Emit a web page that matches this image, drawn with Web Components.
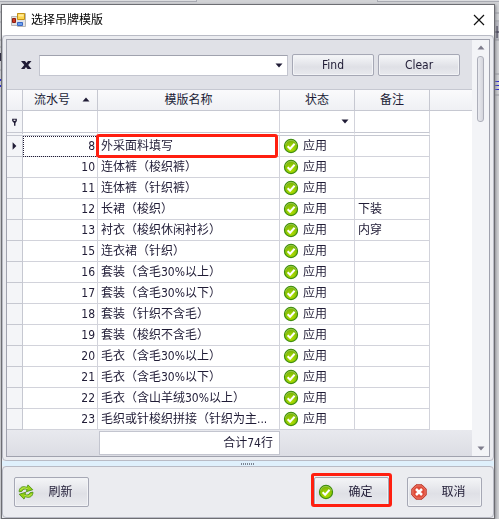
<!DOCTYPE html>
<html lang="zh-CN">
<head>
<meta charset="utf-8">
<title>选择吊牌模版</title>
<style>
  html {
    --ink: #201c36;
    --line: #d2d3db;
    --edge: #a0a2ae;
    --panel: #e0e1e7;
    --accent: #ff1f10;
  }

  body {
    margin: 0;
    min-height: 100vh;
    color: var(--ink);
    background: #d2d3d6;
    font: 12px/16px "DejaVu Sans Condensed", "Noto Sans", "Noto Sans CJK SC", sans-serif;
    overflow: hidden;
  }
</style>
</head>
<body>
<back-drop></back-drop>
<dialog-window heading="选择吊牌模版">
  <scroll-frame>
    <find-bar></find-bar>
    <template-grid></template-grid>
  </scroll-frame>
  <icon-button slot="start" icon="refresh">刷新</icon-button>
  <icon-button slot="end" icon="ok" marked>确定</icon-button>
  <icon-button slot="end" icon="cancel">取消</icon-button>
</dialog-window>

<script>
const makeTemplate = (html) => {
  const template = document.createElement('template');
  template.innerHTML = html;
  return template;
};

class BaseElement extends HTMLElement {
  constructor() {
    super();
    this.attachShadow({ mode: 'open' });
    this.shadowRoot.appendChild(this.constructor.template.content.cloneNode(true));
  }
}

/* Icons */

const ICONS = {
  ok: `
    <defs><radialGradient id="g" cx=".5" cy=".7" r=".7"><stop offset="0" stop-color="#b5e300"/><stop offset="1" stop-color="#6fae08"/></radialGradient></defs>
    <circle cx="8" cy="8" r="6.6" fill="url(#g)" stroke="#3f8f10" stroke-width="1.1"/>
    <path d="M2.6 6.6C3.6 3.2 6 2.4 8 2.4s4.4.8 5.4 4.2" fill="none" stroke="#a9cf62" stroke-width=".8"/>
    <path d="M4.6 8.200l2.5 2.5 4.5-4.900" fill="none" stroke="#fff" stroke-width="2"/>`,
  cancel: `
    <path d="M5 .8h6L15.2 5v6L11 15.2H5L.8 11V5z" fill="#df4a38" stroke="#bb3529"/>
    <path d="M5.4 1.900h5.2l3.5 3.5v5.2l-3.5 3.5H5.4l-3.500-3.500V5.4z" fill="none" stroke="#f08c78" stroke-width=".8"/>
    <path d="M5 5l6 6M11 5l-6 6" stroke="#fff" stroke-width="2.5"/>`,
  refresh: `
    <path d="M1.2 7.800C1 4.500 3.5 2.300 6.5 2.700l2.3.7L10 .9l4.800 4.800-6.500 2 .8-2.200C6.800 4.500 4.700 5 4 7.200z" fill="#96d016" stroke="#4f9414" stroke-width=".9" stroke-linejoin="round"/>
    <path d="M14.900 8.100c.2 3.400-2.300 5.600-5.400 5.200l-2.300-.7L6 15.100 1.200 10.300l6.500-2-.8 2.200c2.300 1 4.400.5 5.100-1.700z" fill="#96d016" stroke="#4f9414" stroke-width=".9" stroke-linejoin="round"/>
    <path d="M2.500 6C4 3.600 6 3.500 9.500 4.500M13.500 10c-1.500 2.400-3.500 2.500-7 1.500" fill="none" stroke="#cdf06a" stroke-width=".8"/>`,
  form: `
    <path d="M.5 4.500h6V1.500h8v13h-8v-1h-6z" fill="#e2e2e4" stroke="#b8b8b8"/>
    <path d="M6.500 1.500h7v6h-7z" fill="#ffd64d" stroke="#c39217"/>
    <path d="M7.500 2.500h5v2h-5z" fill="#ffec9c"/>
    <path d="M1.500 6.500h3v4h-3z" fill="#cf3a22" stroke="#8e1e12"/>
    <path d="M6.500 10.500h5v3h-5z" fill="#6ba0ee" stroke="#3a68c4"/>`,
  close: '<path d="M3 3l10 10M13 3L3 13" stroke="#111" stroke-width="1.2"/>',
  clear: '<path d="M3 4h4l1.500 2L10 4h3.500l-3.300 4 3.300 4h-4L8 10l-1.500 2H3l3.300-4z" fill="#201c36"/>',
  down: '<path d="M4.500 6.500h7L8 10.500z" fill="#201c36"/>',
  up: '<path d="M4.500 9.500h7L8 5.500z" fill="#201c36"/>',
  right: '<path d="M6 4v8l4-4z" fill="#201c36"/>',
  pin: '<path d="M5.500 4.500h5V7L9 9v3H7.500V9l-2-2z" fill="#201c36"/><path d="M7 5.500h2v1.300H7z" fill="#fff"/>',
};

class UiIcon extends BaseElement {
  static template = makeTemplate(`
    <style>
      :host { display: inline-block; flex: none; width: 16px; height: 16px; }
      svg { display: block; width: 100%; height: 100%; }
    </style>
    <svg viewBox="0 0 16 16" aria-hidden="true"></svg>
  `);

  static observedAttributes = ['name'];

  attributeChangedCallback() {
    this.shadowRoot.querySelector('svg').innerHTML = ICONS[this.getAttribute('name')] || '';
  }
}

/* Edges of the application behind the dialog */

class BackDrop extends BaseElement {
  static template = makeTemplate(`
    <style>
      :host { position: fixed; inset: 0; z-index: -1; }
      .top { height: 2px; display: flex; gap: 180px; }
      .top div { border: 1px solid #a9abb3; border-top: 0; background: #dcdde0; }
      .top div:first-child { width: 196px; border-left: 0; }
      .top div:last-child { flex: 1; border-right: 0; }
      .left, .right { position: absolute; top: 0; }
      .left { left: 0; }
      .right { right: 0; }
    </style>
    <div class="top"><div></div><div></div></div>
    <svg class="left" width="2" height="519">
      <path d="M0 12h2M0 22h2M0 40h2M0 47h2M0 70h2" stroke="#9a9ca4"/>
      <path d="M0 53h2v8H0z" fill="#201c36"/>
      <path d="M0 79h2v2H0zM0 85h2v2H0z" fill="#2020d8"/>
    </svg>
    <svg class="right" width="5" height="519">
      <path d="M0 22h5v18H0z" fill="#bfc0c8"/>
      <path d="M0 13h5M0 21h5M0 40h5M0 74h5M0 95h5" stroke="#9a9ca4"/>
      <path d="M0 32h5M3 26v12" stroke="#201c36"/>
      <path d="M1 81h4v1H1zM1 85h4v1H1zM1 89h4v1H1z" fill="#2020d8"/>
    </svg>
  `);
}

/* Dialog shell: title bar, main area, splitter, button bar */

class DialogWindow extends BaseElement {
  static template = makeTemplate(`
    <style>
      :host {
        display: block;
        margin: 4px 4px 0 1px;
        border: 1px solid #6d6e73;
        background: #ebecf0;
        box-shadow: 1px 1px 3px #8a8b90;
      }

      header {
        display: flex;
        align-items: center;
        gap: 4px;
        height: 30px;
        padding: 0 7px 0 9px;
        background: #fff;
      }

      h1 { flex: 1; margin: 0; font: inherit; color: #000; }

      .close {
        display: flex;
        padding: 0;
        border: 0;
        background: none;
      }

      main {
        padding: 3px;
        border: 1px solid #b9bbc5;
        border-radius: 4px;
        background: #ebecf0;
      }

      .splitter {
        display: flex;
        align-items: center;
        justify-content: center;
        height: 5px;
        background: #dff0fc;
      }

      .grip {
        width: 14px;
        height: 2px;
        background: repeating-linear-gradient(90deg, #7b8492 0 1px, transparent 1px 2px);
      }

      footer {
        display: flex;
        gap: 18px;
        padding: 10px 11px;
        border: 1px solid #b9bbc5;
        border-radius: 4px;
      }

      .space { flex: 1; }
    </style>
    <header>
      <ui-icon name="form"></ui-icon>
      <h1></h1>
      <button class="close" aria-label="关闭"><ui-icon name="close"></ui-icon></button>
    </header>
    <main><slot></slot></main>
    <div class="splitter"><div class="grip"></div></div>
    <footer>
      <slot name="start"></slot>
      <div class="space"></div>
      <slot name="end"></slot>
    </footer>
  `);

  connectedCallback() {
    this.shadowRoot.querySelector('h1').textContent = this.getAttribute('heading');
  }
}

class ScrollFrame extends BaseElement {
  static template = makeTemplate(`
    <style>
      :host {
        display: flex;
        border: 1px solid var(--edge);
        background: var(--panel);
      }

      .content { flex: 1; min-width: 0; }

      .bar {
        display: flex;
        flex-direction: column;
        align-items: center;
        width: 17px;
        background: #f3f4f7;
      }

      .bar ui-icon { opacity: .55; }

      .thumb {
        box-sizing: border-box;
        width: 7px;
        height: 66px;
        border: 1px solid #adafba;
        border-radius: 3px;
        background: linear-gradient(90deg, #e9eaef, #d4d5dc);
      }

      .space { flex: 1; }
    </style>
    <div class="content"><slot></slot></div>
    <div class="bar">
      <ui-icon name="up"></ui-icon>
      <div class="thumb"></div>
      <div class="space"></div>
      <ui-icon name="down"></ui-icon>
    </div>
  `);
}

class PushButton extends BaseElement {
  static template = makeTemplate(`
    <style>
      :host { display: inline-block; }

      button {
        display: block;
        box-sizing: border-box;
        width: 82px;
        height: 22px;
        padding: 0;
        border: 1px solid #a6a8b5;
        border-radius: 2px;
        background: linear-gradient(#f6f7f9, #dfe0e6 60%, #e9eaee);
        box-shadow: inset 0 0 0 1px #f2f3f6;
        color: inherit;
        font: inherit;
      }
    </style>
    <button><slot></slot></button>
  `);
}

class FindBar extends BaseElement {
  static template = makeTemplate(`
    <style>
      :host {
        display: flex;
        align-items: center;
        gap: 4px;
        padding: 14px 12px 13px 11px;
      }

      .clear, .drop {
        display: flex;
        padding: 0;
        border: 0;
        background: none;
      }

      .clear { margin-right: 1px; }

      .combo {
        display: flex;
        flex: 1;
        align-items: center;
        box-sizing: border-box;
        height: 21px;
        border: 1px solid #c3c5cf;
        border-top-color: var(--edge);
        background: #fff;
      }

      input {
        flex: 1;
        min-width: 0;
        padding: 0 4px;
        border: 0;
        outline: 0;
        background: none;
        color: inherit;
        font: inherit;
      }
    </style>
    <button class="clear" aria-label="关闭查找"><ui-icon name="clear"></ui-icon></button>
    <div class="combo">
      <input type="text" aria-label="查找">
      <button class="drop" aria-label="历史"><ui-icon name="down"></ui-icon></button>
    </div>
    <push-button>Find</push-button>
    <push-button>Clear</push-button>
  `);
}

/* Grid */

const ROWS = [
  [8, '外采面料填写'],
  [10, '连体裤（梭织裤）'],
  [11, '连体裤（针织裤）'],
  [12, '长裙（梭织）', '下装'],
  [13, '衬衣（梭织休闲衬衫）', '内穿'],
  [15, '连衣裙（针织）'],
  [16, '套装（含毛30%以上）'],
  [17, '套装（含毛30%以下）'],
  [18, '套装（针织不含毛）'],
  [19, '套装（梭织不含毛）'],
  [20, '毛衣（含毛30%以上）'],
  [21, '毛衣（含毛30%以下）'],
  [22, '毛衣（含山羊绒30%以上）'],
  [23, '毛织或针梭织拼接（针织为主...'],
];

class TemplateGrid extends BaseElement {
  static template = makeTemplate(`
    <style>
      :host { display: block; }

      table {
        width: 100%;
        border-collapse: separate;
        border-spacing: 0;
        table-layout: fixed;
        background: #fff;
      }

      .col-mark { width: 16px; }
      .col-name { width: 182px; }
      .col-short { width: 75px; }

      th, td {
        box-sizing: border-box;
        position: relative;
        height: 21px;
        padding: 0 3px;
        border-right: 1px solid var(--line);
        border-bottom: 1px solid var(--line);
        font-weight: normal;
        white-space: nowrap;
        vertical-align: middle;
      }

      thead th {
        height: 22px;
        border-top: 1px solid #c3c5cf;
        border-color: #c6c8d1;
        background: linear-gradient(#fafafc, #eff0f4);
      }

      th:last-child, td:last-child { border-right: 0; }
      td:last-child { border-bottom: 0; }

      td:first-child {
        padding: 0;
        background: #f4f5f8;
        border-color: #c6c8d1;
      }

      td ui-icon { display: block; }
      td:first-child ui-icon { margin: 0 auto; width: 15px; }

      .sort { display: flex; align-items: center; }
      .sort span { flex: 1; }

      .filter td {
        height: 25px;
        padding: 0;
        border-bottom: 4px double #c6c8d1;
      }

      .filter td:last-child { border-bottom: 0; }

      .filter input, .filter select {
        display: block;
        box-sizing: border-box;
        width: 100%;
        height: 20px;
        padding: 0 4px;
        border: 0;
        outline: 0;
        appearance: none;
        background: none;
        color: inherit;
        font: inherit;
      }

      .filter .pick ui-icon {
        position: absolute;
        top: 2px;
        right: 1px;
        pointer-events: none;
      }

      .number { text-align: right; padding-right: 2px; }

      .focused { outline: 1px dotted var(--ink); outline-offset: -1px; }

      .marked::after {
        content: "";
        position: absolute;
        inset: -2px 1px -2px -2px;
        border: 3px solid var(--accent);
        border-radius: 3px;
      }

      .status { display: flex; align-items: center; gap: 4px; }

      .total {
        display: grid;
        grid-template-columns: 92px 181px 1fr;
        padding: 1px 0;
        background: linear-gradient(#e8e9ee, #dcdde4);
      }

      output {
        grid-column: 2;
        box-sizing: border-box;
        height: 24px;
        padding: 3px 6px;
        border: 1px solid #c3c5cf;
        background: #fff;
        text-align: right;
      }
    </style>
    <table>
      <colgroup>
        <col class="col-mark">
        <col class="col-short">
        <col class="col-name">
        <col class="col-short">
        <col class="col-short">
        <col>
      </colgroup>
      <thead>
        <tr>
          <th></th>
          <th><div class="sort"><span>流水号</span><ui-icon name="up"></ui-icon></div></th>
          <th>模版名称</th>
          <th>状态</th>
          <th>备注</th>
          <th></th>
        </tr>
      </thead>
      <tbody>
        <tr class="filter">
          <td><ui-icon name="pin"></ui-icon></td>
          <td><input type="text" aria-label="筛选流水号"></td>
          <td><input type="text" aria-label="筛选模版名称"></td>
          <td class="pick"><select aria-label="筛选状态"><option></option></select><ui-icon name="down"></ui-icon></td>
          <td><input type="text" aria-label="筛选备注"></td>
          <td></td>
        </tr>
      </tbody>
    </table>
    <div class="total"><output>合计74行</output></div>
  `);

  connectedCallback() {
    const body = this.shadowRoot.querySelector('tbody');
    ROWS.forEach(([id, name, note = ''], index) => {
      const row = document.createElement('tr');
      const current = index === 0;
      row.innerHTML = `
        <td>${current ? '<ui-icon name="right"></ui-icon>' : ''}</td>
        <td class="number ${current ? 'focused' : ''}">${id}</td>
        <td class="${current ? 'marked' : ''}">${name}</td>
        <td><div class="status"><ui-icon name="ok"></ui-icon>应用</div></td>
        <td>${note}</td>
        <td></td>`;
      body.appendChild(row);
    });
  }
}

/* Bottom bar button with an icon and an optional red frame */

class IconButton extends BaseElement {
  static template = makeTemplate(`
    <style>
      :host { display: block; position: relative; }

      button {
        display: flex;
        align-items: center;
        box-sizing: border-box;
        width: 75px;
        height: 30px;
        padding: 0 3px;
        border: 1px solid #a6a8b5;
        border-radius: 2px;
        background: linear-gradient(#f4f5f7, #dfe0e6 55%, #e9eaee);
        box-shadow: inset 0 0 0 1px #f2f3f6;
        color: inherit;
        font: inherit;
      }

      span { flex: 1; padding-left: 2px; text-align: center; }

      :host([marked])::after {
        content: "";
        position: absolute;
        inset: -4px -3px 0;
        border: 3px solid var(--accent);
        border-radius: 3px;
        pointer-events: none;
      }
    </style>
    <button><ui-icon></ui-icon><span><slot></slot></span></button>
  `);

  connectedCallback() {
    this.shadowRoot.querySelector('ui-icon').setAttribute('name', this.getAttribute('icon'));
  }
}

customElements.define('ui-icon', UiIcon);
customElements.define('back-drop', BackDrop);
customElements.define('push-button', PushButton);
customElements.define('icon-button', IconButton);
customElements.define('find-bar', FindBar);
customElements.define('template-grid', TemplateGrid);
customElements.define('scroll-frame', ScrollFrame);
customElements.define('dialog-window', DialogWindow);
</script>
</body>
</html>
